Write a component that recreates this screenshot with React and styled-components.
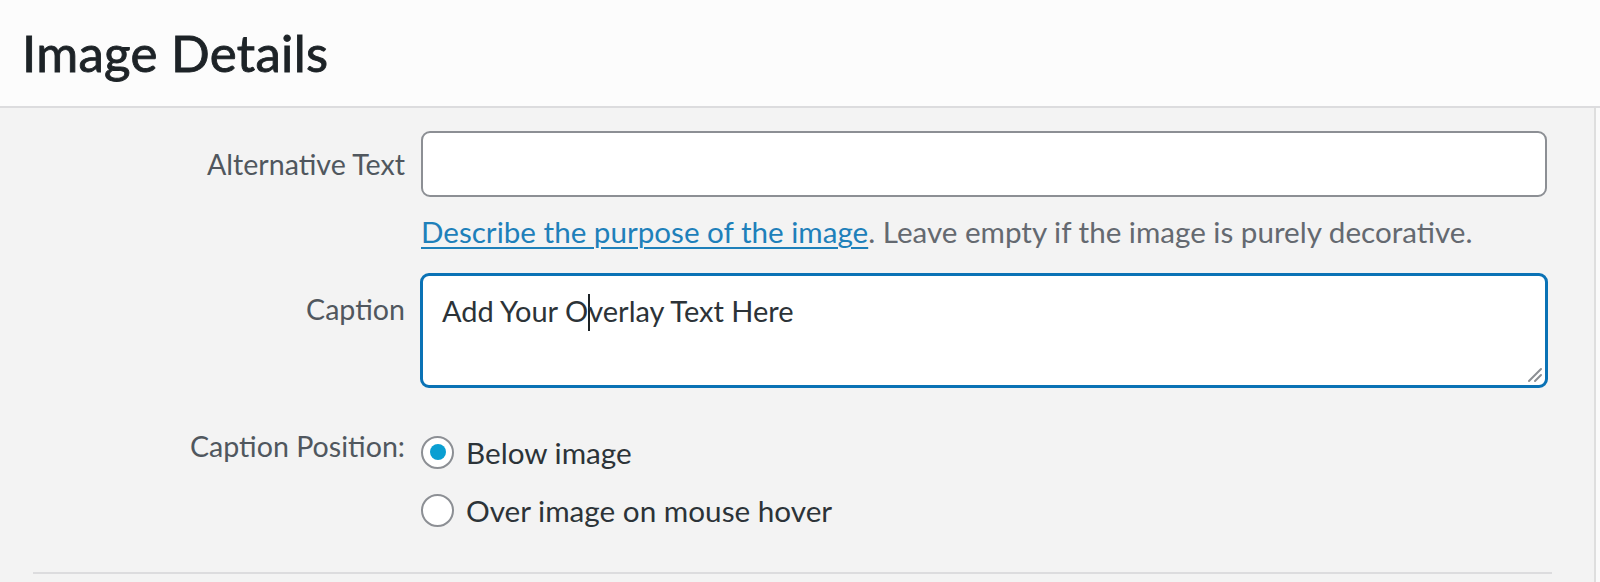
import React from "react";
import styled, { createGlobalStyle } from "styled-components";

const GlobalStyle = createGlobalStyle`
  * { box-sizing: border-box; }
  html, body { margin: 0; padding: 0; height: 100%; }
  body {
    font-family: Lato, "Open Sans", "Liberation Sans", sans-serif;
    background: #f3f3f3;
    color: #2c3338;
  }
  #root { min-height: 100%; }
`;

const Page = styled.div`
  display: flex;
  flex-direction: column;
  min-height: 100vh;
`;

const Header = styled.header`
  height: 108px;
  display: flex;
  align-items: center;
  padding: 0 0 2px 22px;
  background: #fcfcfc;
  border-bottom: 2px solid #dcdcde;
`;

const Title = styled.h1`
  margin: 0;
  font-size: 51px;
  font-weight: 400;
  line-height: 1;
  color: #1d2327;
  letter-spacing: 0.3px;
  -webkit-text-stroke: 0.9px #1d2327;
`;

const Body = styled.main`
  flex: 1;
  display: flex;
`;

const Panel = styled.div`
  flex: 1;
  padding: 23px 0 0 0;
  border-right: 2px solid #dedede;
  background: #f3f3f3;
`;

const Edge = styled.div`
  width: 4px;
  background: #fafafa;
`;

const Form = styled.div`
  display: flex;
  flex-direction: column;
  padding-right: 47px;
`;

const Field = styled.div`
  display: grid;
  grid-template-columns: 405px 1fr;
  column-gap: 16px;
  align-items: start;
  margin-top: ${(p) => p.$top || 0}px;
`;

const Label = styled.label`
  text-align: right;
  font-size: 28.6px;
  line-height: 40px;
  color: #50575e;
  padding-top: ${(p) => p.$pad || 0}px;
`;

const Control = styled.div`
  display: flex;
  flex-direction: column;
  min-width: 0;
`;

const TextInput = styled.input`
  display: block;
  width: 100%;
  height: 66px;
  border: 2px solid #8c8f94;
  border-radius: 9px;
  background: #fff;
  padding: 0 18px;
  font: inherit;
  font-size: 29px;
  color: #2c3338;
  outline: none;
`;

const Help = styled.p`
  margin: 15px 0 0;
  font-size: 29.6px;
  line-height: 40px;
  color: #646970;
  white-space: nowrap;
`;

const HelpLink = styled.a`
  color: #1e80ba;
  text-decoration: underline;
  text-underline-offset: 4px;
  text-decoration-thickness: 2px;
`;

const TextArea = styled.div`
  position: relative;
  height: 115px;
  margin: 0 -1px;
  border: 3px solid #0a72b5;
  border-radius: 9px;
  background: #fff;
  padding: 15px 19px;
  font-size: 29px;
  line-height: 40px;
  color: #2c3338;
`;

const Caret = styled.span`
  display: inline-block;
  width: 2px;
  height: 37px;
  margin: 0 -2px 0 0;
  vertical-align: -9px;
  background: #1d2327;
`;

const Grip = styled.svg`
  position: absolute;
  right: 2px;
  bottom: 2px;
  width: 18px;
  height: 18px;
`;

const RadioGroup = styled.div`
  display: flex;
  flex-direction: column;
  gap: 18px;
  padding-top: 6px;
`;

const RadioRow = styled.label`
  display: flex;
  align-items: center;
  gap: 12px;
  height: 40px;
  font-size: 29.7px;
  color: #2c3338;
`;

const RadioCircle = styled.span`
  flex: none;
  width: 33px;
  height: 33px;
  border-radius: 50%;
  border: 2px solid #8c8f94;
  background: #fff;
  display: flex;
  align-items: center;
  justify-content: center;

  &::after {
    content: "";
    width: 16px;
    height: 16px;
    border-radius: 50%;
    background: #0a9fd2;
    display: ${(p) => (p.$checked ? "block" : "none")};
  }
`;

const Divider = styled.hr`
  margin: 42px 42px 0 33px;
  border: 0;
  border-top: 2px solid #dcdcde;
`;

export default function App() {
  return (
    <>
      <GlobalStyle />
      <Page>
        <Header>
          <Title>Image Details</Title>
        </Header>
        <Body>
          <Panel>
            <Form>
              <Field>
                <Label htmlFor="alt-text" $pad={13}>
                  Alternative Text
                </Label>
                <Control>
                  <TextInput id="alt-text" type="text" />
                  <Help>
                    <HelpLink href="#">Describe the purpose of the image</HelpLink>. Leave empty if the image is purely decorative.
                  </Help>
                </Control>
              </Field>
              <Field $top={21}>
                <Label $pad={16}>Caption</Label>
                <Control>
                  <TextArea role="textbox" aria-multiline="true">
                    Add Your O<Caret />verlay Text Here
                    <Grip viewBox="0 0 18 18">
                      <path d="M16 4 L4 16 M16 10 L10 16" stroke="#8c8f94" strokeWidth="2" strokeLinecap="round" />
                    </Grip>
                  </TextArea>
                </Control>
              </Field>
              <Field $top={38}>
                <Label>Caption Position:</Label>
                <RadioGroup>
                  <RadioRow>
                    <RadioCircle $checked />
                    Below image
                  </RadioRow>
                  <RadioRow>
                    <RadioCircle />
                    Over image on mouse hover
                  </RadioRow>
                </RadioGroup>
              </Field>
            </Form>
            <Divider />
          </Panel>
          <Edge />
        </Body>
      </Page>
    </>
  );
}
